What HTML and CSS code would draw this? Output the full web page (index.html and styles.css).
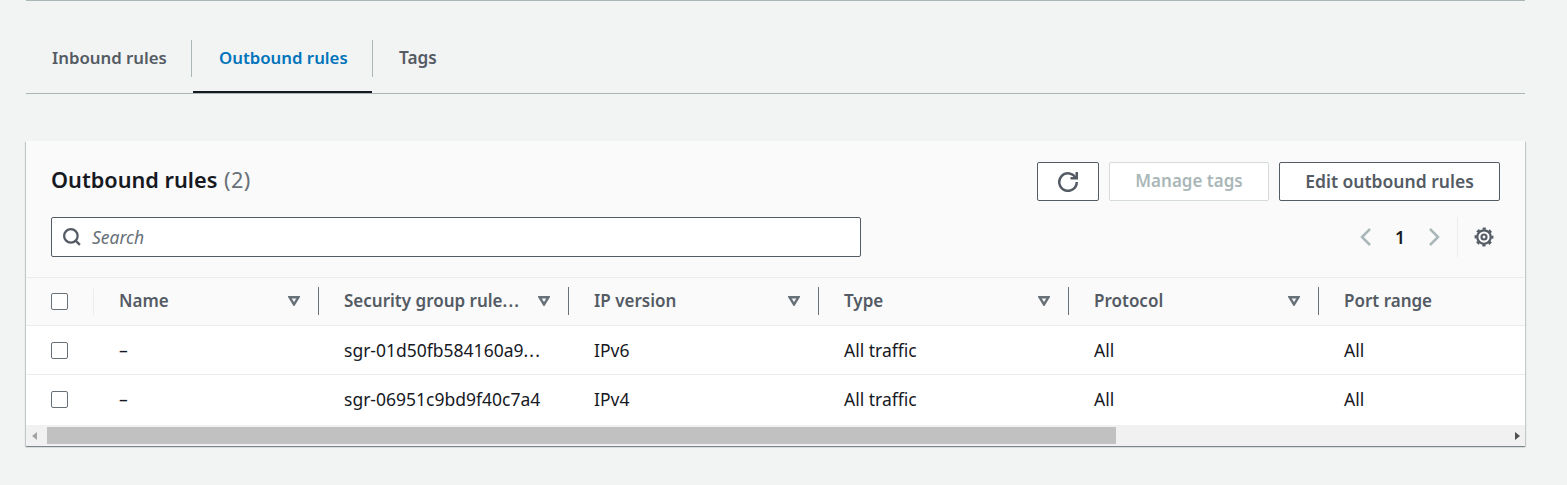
FILE: index.html
```html
<!DOCTYPE html>
<html lang="en">
<head>
  <meta charset="UTF-8">
  <title>Outbound rules</title>
  <link rel="stylesheet" href="styles.css">
</head>
<body>
  <div class="top-rule"></div>

  <div class="tabs">
    <a class="tab tab-first">Inbound rules</a>
    <a class="tab tab-active">Outbound rules</a>
    <a class="tab tab-last">Tags</a>
  </div>

  <section class="panel">
    <header class="panel-header">
      <div class="title-row">
        <h2 class="panel-title">Outbound rules <span class="count">(2)</span></h2>
        <div class="actions">
          <button class="btn btn-icon" aria-label="Refresh">
            <svg class="icon-20" viewBox="0 0 16 16"><path d="M10 5h5V0"/><path d="M15 8a7 7 0 1 1-.7-3"/></svg>
          </button>
          <button class="btn btn-disabled btn-tags">Manage tags</button>
          <button class="btn btn-edit">Edit outbound rules</button>
        </div>
      </div>
      <div class="tools-row">
        <div class="search">
          <svg class="icon-search" viewBox="0 0 16 16"><circle cx="7" cy="7" r="6"/><path d="M11 11l4 4"/></svg>
          <span class="search-placeholder">Search</span>
        </div>
        <div class="pager">
          <svg class="chevron" viewBox="0 0 12 20"><path d="M10 2L2 10l8 8"/></svg>
          <span class="page-num">1</span>
          <svg class="chevron" viewBox="0 0 12 20"><path d="M2 2l8 8-8 8"/></svg>
          <span class="pager-sep"></span>
          <svg class="icon-20 gear" viewBox="0 0 16 16">
            <circle cx="8" cy="8" r="5.4" stroke-width="1.8"/>
            <circle class="gear-teeth" cx="8" cy="8" r="6.7"/>
            <circle cx="8" cy="8" r="2" stroke-width="1.7"/>
          </svg>
        </div>
      </div>
    </header>

    <div class="table-wrap">
      <table class="rules">
        <thead>
          <tr>
            <th class="col-check"><span class="checkbox"></span><span class="check-sep"></span></th>
            <th class="col-name"><div class="th-in">Name<svg class="sort" viewBox="0 0 12 10"><path d="M1.5 1.2h9L6 8.5z"/></svg></div></th>
            <th><div class="th-in"><span>Security group rule<span class="dots">...</span></span><svg class="sort" viewBox="0 0 12 10"><path d="M1.5 1.2h9L6 8.5z"/></svg></div></th>
            <th><div class="th-in">IP version<svg class="sort" viewBox="0 0 12 10"><path d="M1.5 1.2h9L6 8.5z"/></svg></div></th>
            <th><div class="th-in">Type<svg class="sort" viewBox="0 0 12 10"><path d="M1.5 1.2h9L6 8.5z"/></svg></div></th>
            <th><div class="th-in">Protocol<svg class="sort" viewBox="0 0 12 10"><path d="M1.5 1.2h9L6 8.5z"/></svg></div></th>
            <th><div class="th-in th-last">Port range</div></th>
          </tr>
        </thead>
        <tbody>
          <tr>
            <td class="col-check"><span class="checkbox"></span></td>
            <td>–</td>
            <td>sgr-01d50fb584160a9<span class="dots">...</span></td>
            <td>IPv6</td>
            <td>All traffic</td>
            <td>All</td>
            <td>All</td>
          </tr>
          <tr>
            <td class="col-check"><span class="checkbox"></span></td>
            <td>–</td>
            <td>sgr-06951c9bd9f40c7a4</td>
            <td>IPv4</td>
            <td>All traffic</td>
            <td>All</td>
            <td>All</td>
          </tr>
        </tbody>
      </table>
    </div>

    <div class="scrollbar">
      <span class="arrow arrow-left"></span>
      <div class="scroll-track"><div class="scroll-thumb"></div></div>
      <span class="arrow arrow-right"></span>
    </div>
  </section>
</body>
</html>
```

FILE: styles.css
```css
* {
  box-sizing: border-box;
}

body {
  margin: 0;
  padding: 0 42px 0 26px;
  height: 485px;
  overflow: hidden;
  font-family: "Noto Sans", Arial, sans-serif;
  font-size: 17.5px;
  background-color: #f2f3f3;
  color: #16191f;
}

svg {
  fill: none;
  stroke: currentColor;
  stroke-width: 2;
  display: block;
}

.top-rule {
  height: 1px;
  background-color: #aab7b8;
}

/* tabs */
.tabs {
  display: flex;
  height: 93px;
  padding-top: 39px;
  border-bottom: 1px solid #aab7b8;
}

.tab {
  height: 53px;
  padding-top: 4px;
  line-height: 28px;
  font-size: 16.8px;
  font-weight: 600;
  color: #545b64;
  position: relative;
}

.tab-first {
  width: 167px;
  padding-left: 26px;
}

.tab-first::after,
.tab-active::after {
  content: "";
  position: absolute;
  top: 0;
  right: 0;
  width: 1px;
  height: 37px;
  background-color: #aab7b8;
}

.tab-first::after {
  right: 1px;
}

.tab-active {
  width: 180px;
  padding-left: 26px;
  color: #0073bb;
}

.tab-active::before {
  content: "";
  position: absolute;
  left: 0;
  right: 1px;
  bottom: 0;
  height: 2px;
  background-color: #16191f;
}

.tab-last {
  padding-left: 26px;
  font-size: 17.2px;
}

/* panel */
.panel {
  margin-top: 47px;
  background-color: #ffffff;
  box-shadow: 0 1px 1px 0 rgba(0, 28, 36, 0.3), 1px 1px 1px 0 rgba(0, 28, 36, 0.15), -1px 1px 1px 0 rgba(0, 28, 36, 0.15);
}

.panel-header {
  height: 137px;
  padding: 21px 25px 0;
  background-color: #fafafa;
  border-bottom: 1px solid #eaeded;
}

.title-row,
.tools-row {
  display: flex;
  justify-content: space-between;
}

.tools-row {
  margin-top: 16px;
}

.panel-title {
  margin: 0;
  font-size: 21.7px;
  line-height: 35px;
  font-weight: 600;
}

.count {
  margin-left: 1px;
  font-weight: 400;
  letter-spacing: 0.4px;
  color: #687078;
}

.actions {
  display: flex;
  gap: 10px;
}

.btn {
  height: 39px;
  padding: 0 0 2px;
  font-family: inherit;
  font-size: 17.5px;
  font-weight: 600;
  color: #545b64;
  background-color: #ffffff;
  border: 1px solid #545b64;
  border-radius: 2px;
}

.btn-icon {
  width: 62px;
  padding: 0;
  display: flex;
  align-items: center;
  justify-content: center;
}

.btn-tags {
  width: 160px;
  font-size: 17px;
}

.btn-edit {
  width: 221px;
}

.btn-disabled {
  color: #aab7b8;
  border-color: #d5dbdb;
}

.icon-20 {
  width: 20px;
  height: 20px;
  color: #545b64;
}

.gear-teeth {
  stroke-width: 1.7;
  stroke-dasharray: 2.6 2.66;
  stroke-dashoffset: 1.3;
}

.search {
  width: 810px;
  height: 40px;
  display: flex;
  align-items: center;
  padding-left: 11px;
  background-color: #ffffff;
  border: 1px solid #545b64;
  border-radius: 2px;
}

.icon-search {
  width: 18px;
  height: 18px;
  color: #545b64;
}

.search-placeholder {
  margin-left: 11px;
  font-style: italic;
  color: #687078;
}

.pager {
  display: flex;
  align-items: center;
  height: 40px;
  padding-right: 6px;
}

.chevron {
  width: 12px;
  height: 20px;
  stroke-width: 2.5;
  color: #aab7b8;
}

.page-num {
  width: 56px;
  text-align: center;
  font-weight: 600;
}

.pager-sep {
  width: 1px;
  height: 40px;
  margin: 0 16px 0 17px;
  background-color: #eaeded;
}

/* table */
.table-wrap {
  overflow: hidden;
}

.rules {
  width: 1543px;
  table-layout: fixed;
  border-collapse: separate;
  border-spacing: 0;
}

.rules th {
  width: 250px;
  height: 48px;
  padding: 0 0 2px;
  text-align: left;
  font-size: 17px;
  font-weight: 600;
  color: #545b64;
  background-color: #fafafa;
  border-bottom: 1px solid #eaeded;
}

.rules td {
  height: 49px;
  padding: 0 0 1px 25px;
  background-color: #ffffff;
  border-bottom: 1px solid #eaeded;
}

.rules tbody tr:last-child td {
  height: 50px;
  padding-bottom: 2px;
  border-bottom: 0;
}

.rules th.col-check,
.rules td.col-check {
  width: 68px;
  padding: 0 0 0 25px;
  position: relative;
}

.rules th.col-name {
  width: 225px;
}

.dots {
  letter-spacing: 1.2px;
}

.checkbox {
  display: block;
  width: 17px;
  height: 17px;
  background-color: #ffffff;
  border: 1px solid #687078;
  border-radius: 2px;
}

.check-sep {
  position: absolute;
  top: 11px;
  right: 0;
  width: 1px;
  height: 26px;
  background-color: #eaeded;
}

.th-in {
  display: flex;
  align-items: center;
  justify-content: space-between;
  height: 28px;
  padding: 0 18px 0 25px;
  border-right: 1px solid #687078;
}

.th-last {
  border-right: 0;
}

.sort {
  width: 12px;
  height: 10px;
  stroke-width: 2.4;
  color: #687078;
}

/* scrollbar */
.scrollbar {
  height: 21px;
  display: flex;
  align-items: center;
  background-color: #f1f1f1;
}

.scroll-track {
  flex: 1;
  height: 17px;
}

.scroll-thumb {
  width: 1069px;
  height: 17px;
  margin-left: 5px;
  background-color: #c1c1c1;
}

.arrow {
  width: 16px;
  display: flex;
  justify-content: center;
}

.arrow::before {
  content: "";
  border-top: 4px solid transparent;
  border-bottom: 4px solid transparent;
}

.arrow-left::before {
  border-right: 5px solid #a3a3a3;
}

.arrow-right::before {
  border-left: 5px solid #505050;
}
```
